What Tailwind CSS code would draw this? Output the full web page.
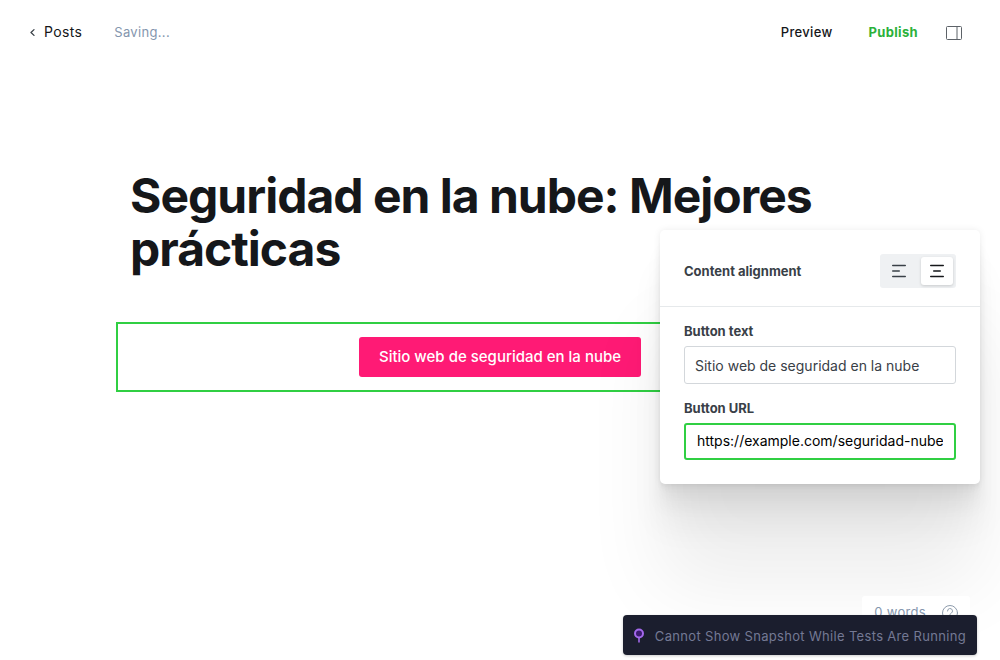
<!DOCTYPE html>
<html lang="en">
<head>
<meta charset="utf-8">
<meta name="viewport" content="width=device-width, initial-scale=1">
<title>Post editor</title>
<script src="https://cdn.jsdelivr.net/npm/@tailwindcss/browser@4"></script>
</head>
<body class="relative flex min-h-screen flex-col overflow-x-hidden bg-white font-['Inter',sans-serif] text-sm text-[#394047]">
  <header class="flex h-[65px] items-center justify-between px-7 text-[13px]">
    <nav class="flex items-center gap-8">
      <a href="#" class="flex items-center gap-2 pb-px text-sm tracking-wide text-[#15171a]">
        <svg class="size-2" viewBox="0 0 8 8" fill="none" stroke="#394047" stroke-width="1.3" stroke-linecap="round" stroke-linejoin="round"><path d="M6 1.6 3 4.5 6 7.4"/></svg>
        Posts
      </a>
      <span class="tracking-wide text-[#8496ae]">Saving...</span>
    </nav>
    <div class="flex items-center">
      <button type="button" class="font-medium tracking-wide text-[#15171a]">Preview</button>
      <button type="button" class="ml-9 font-bold tracking-wide text-[#2bb13a]">Publish</button>
      <button type="button" aria-label="Settings" class="mr-2.5 ml-7">
        <svg class="size-4" viewBox="0 0 16 16" fill="none" stroke="#5d6268"><rect x=".5" y="1.5" width="15" height="13" rx="1"/><path d="M11 1.5v13"/></svg>
      </button>
    </div>
  </header>

  <main class="mx-auto w-full max-w-[768px] pt-[104px]">
    <h1 class="px-3.5 text-5xl leading-[53px] font-bold tracking-[-1px] text-[#15171a]">Seguridad en la nube: Mejores prácticas</h1>
    <section class="mt-[47px] flex justify-center border-2 border-[#30cf43] px-3.5 py-[13px]">
      <a href="https://example.com/seguridad-nube" class="flex h-10 items-center rounded-[3px] bg-[#ff1a75] px-5 text-[15px] font-medium text-white">Sitio web de seguridad en la nube</a>
    </section>
  </main>

  <aside class="absolute top-[230px] right-5 w-80 rounded-[5px] bg-white shadow-[0_0_7px_rgba(0,0,0,0.08),0_3px_2px_rgba(0,0,0,0.01),0_7px_5px_rgba(0,0,0,0.02),0_13px_10px_rgba(0,0,0,0.02),0_22px_18px_rgba(0,0,0,0.04),0_42px_33px_rgba(0,0,0,0.05),0_100px_80px_rgba(0,0,0,0.07)]">
    <div class="flex h-[77px] items-center justify-between border-b border-[#e6e9eb] px-6 pt-1.5">
      <span class="text-[13px] font-bold">Content alignment</span>
      <div class="flex rounded-[3px] bg-[#eff1f3] p-[3px]">
        <button type="button" aria-label="Align left" class="mr-1.5 flex h-7 w-8 items-center justify-center">
          <svg class="h-3.5 w-4" viewBox="0 0 16 14" fill="none" stroke="#394047" stroke-width="1.4" stroke-linecap="round"><path d="M1.7 1.5h12.6M1.7 7h6.6M1.7 12.5h12.6"/></svg>
        </button>
        <button type="button" aria-label="Align center" aria-pressed="true" class="flex h-7 w-8 items-center justify-center rounded-[3px] bg-white shadow-[0_1px_3px_rgba(0,0,0,0.16)]">
          <svg class="h-3.5 w-4" viewBox="0 0 16 14" fill="none" stroke="#15171a" stroke-width="1.4" stroke-linecap="round"><path d="M1.7 1.5h12.6M4.7 7h6.6M1.7 12.5h12.6"/></svg>
        </button>
      </div>
    </div>
    <div class="flex flex-col px-6 pt-[15px] pb-6">
      <label for="button-text" class="mb-[5px] text-[13px] leading-[19px] font-bold">Button text</label>
      <input id="button-text" type="text" value="Sitio web de seguridad en la nube" class="h-[38px] w-full rounded-[3px] border border-[#d3d7db] bg-white px-2.5 outline-none">
      <label for="button-url" class="mt-[15px] mb-[5px] text-[13px] leading-[19px] font-bold">Button URL</label>
      <input id="button-url" type="text" value="https://example.com/seguridad-nube" class="h-[37px] w-full rounded-[3px] border-2 border-[#30cf43] bg-white px-[11px] pb-0.5 text-black outline-none">
    </div>
  </aside>

  <div class="absolute right-[30px] bottom-7 flex h-9 items-center gap-4 rounded-[3px] bg-white pr-3 pb-0.5 pl-3 text-[13px] tracking-wide text-[#8496ae]">
    <span class="pb-0.5">0 words</span>
    <a href="#" aria-label="Help">
      <svg class="size-4" viewBox="0 0 16 16" fill="none" stroke="#8e9cac" stroke-linecap="round"><circle cx="8" cy="8" r="7.5"/><path d="M5.5 6a2.500 2.500 0 1 1 3.700 2.200C8.400 8.700 8 9 8 10M8 12v.2"/></svg>
    </a>
  </div>

  <div role="status" class="absolute right-[23px] bottom-[5px] flex h-10 items-center gap-2.5 rounded bg-[#1b1e2e] pt-0.5 pr-[11px] pl-2.5 text-[13px] tracking-wide text-[#747994] shadow-[0_1px_3px_rgba(0,0,0,0.2)]">
    <svg class="h-4 w-3" viewBox="0 0 12 16" fill="none" stroke="#a368eb"><circle cx="6" cy="5.5" r="4" fill="#3c1a70" stroke-width="2"/><path d="M6 9.5v5" stroke-width="1.6"/></svg>
    <span>Cannot Show Snapshot While Tests Are Running</span>
  </div>
</body>
</html>
